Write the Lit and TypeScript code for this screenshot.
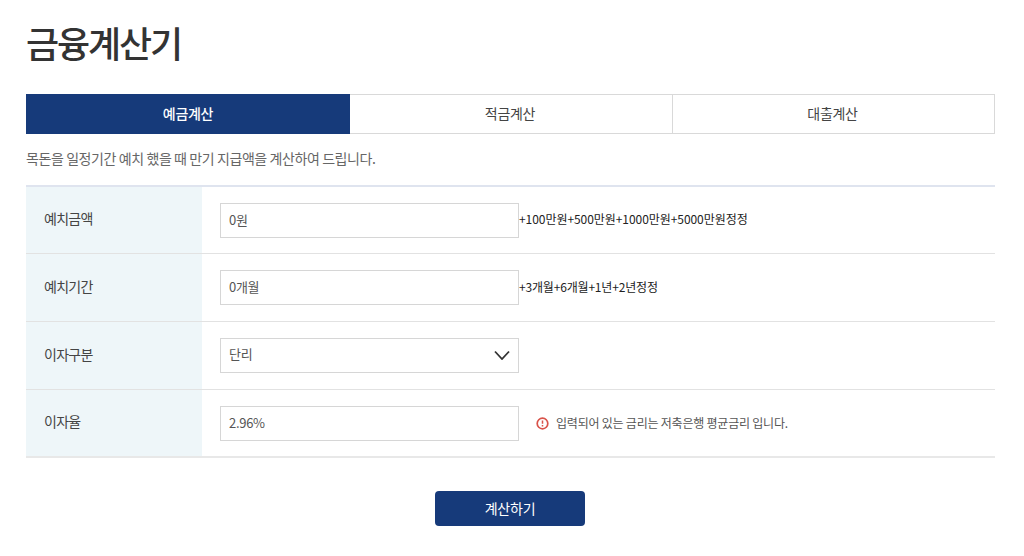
import { LitElement, html, css } from "lit";
import { customElement } from "lit/decorators.js";

@customElement("app-root")
export class AppRoot extends LitElement {
  static styles = css`
    :host {
      display: block;
      width: 1024px;
      height: 556px;
      overflow: hidden;
      background: #fff;
      font-family: "Noto Sans CJK KR", "Noto Sans", sans-serif;
      color: #333;
    }
    * { box-sizing: border-box; }
    .page { padding: 0 29px 0 26px; display: flex; flex-direction: column; }
    h1 {
      margin: 0;
      height: 94px;
      padding-top: 17px;
      font-size: 36px;
      line-height: 50px;
      font-weight: 500;
      letter-spacing: -2.1px;
      color: #333;
    }
    .tabs { display: grid; grid-template-columns: 324px 323px 322px; height: 40px; }
    .tab {
      display: flex;
      align-items: center;
      justify-content: center;
      font-size: 14px;
      letter-spacing: -0.3px;
      color: #444;
      border: 1px solid #d9d9d9;
      border-left: 0;
      padding: 0 2px 2px 0;
    }
    .tab.active { background: #163a7a; border: 0; color: #fff; font-weight: 500; padding: 0 0 2px 0; }
    .desc {
      margin: 0;
      height: 51px;
      padding-top: 14px;
      font-size: 14px;
      line-height: 20px;
      letter-spacing: -0.41px;
      color: #666;
    }
    .table { border-top: 2px solid #dfe4ef; display: flex; flex-direction: column; }
    .row {
      display: grid;
      grid-template-columns: 176px 1fr;
      height: 68px;
      border-bottom: 1px solid #e2e2e2;
    }
    .row.first { height: 67px; }
    .row.last { border-bottom-width: 2px; border-bottom-color: #e8e8e8; }
    .label {
      background: #eef6f9;
      display: flex;
      align-items: center;
      padding: 0 0 4px 18px;
      font-size: 14px;
      letter-spacing: -0.7px;
      color: #444;
    }
    .cell { display: flex; align-items: center; padding-left: 18px; }
    .field {
      width: 299px;
      height: 35px;
      border: 1px solid #d6d6d6;
      background: #fff;
      padding: 0 8px 2px;
      font: inherit;
      font-size: 13px;
      letter-spacing: -0.3px;
      color: #555;
      outline: none;
      border-radius: 0;
      display: block;
    }
    .select-wrap { position: relative; width: 299px; height: 35px; }
    select.field { appearance: none; -webkit-appearance: none; padding-bottom: 4px; }
    .chevron { position: absolute; right: 9px; top: 12px; width: 16px; height: 10px; pointer-events: none; }
    .chips { display: flex; font-size: 12px; letter-spacing: -0.06px; color: #222; padding-bottom: 3px; }
    .chips.tight { letter-spacing: -0.18px; }
    .note { display: flex; align-items: center; margin-left: 17px; font-size: 12px; letter-spacing: -0.22px; color: #555; }
    .note span { padding-bottom: 2px; }
    .note svg { width: 13px; height: 13px; margin-right: 7px; }
    .actions { display: flex; justify-content: center; padding: 33px 1px 0 0; }
    button {
      width: 150px;
      height: 35px;
      border: 0;
      border-radius: 4px;
      background: #163a7a;
      color: #fff;
      font: inherit;
      font-size: 14px;
      letter-spacing: -0.2px;
      padding: 0 0 2px;
    }
  `;

  render() {
    return html`
      <div class="page">
        <h1>금융계산기</h1>
        <div class="tabs">
          <div class="tab active">예금계산</div>
          <div class="tab">적금계산</div>
          <div class="tab">대출계산</div>
        </div>
        <p class="desc">목돈을 일정기간 예치 했을 때 만기 지급액을 계산하여 드립니다.</p>
        <div class="table">
          <div class="row first">
            <div class="label">예치금액</div>
            <div class="cell">
              <input class="field" .value=${"0원"} />
              <div class="chips">
                <span>+100만원</span><span>+500만원</span><span>+1000만원</span><span>+5000만원</span><span>정정</span>
              </div>
            </div>
          </div>
          <div class="row">
            <div class="label">예치기간</div>
            <div class="cell">
              <input class="field" .value=${"0개월"} />
              <div class="chips tight">
                <span>+3개월</span><span>+6개월</span><span>+1년</span><span>+2년</span><span>정정</span>
              </div>
            </div>
          </div>
          <div class="row">
            <div class="label">이자구분</div>
            <div class="cell">
              <div class="select-wrap">
                <select class="field"><option>단리</option><option>복리</option></select>
                <svg class="chevron" viewBox="0 0 16 10" fill="none" stroke="#333" stroke-width="1.8">
                  <path d="M1 1.5 8 9 15 1.5" />
                </svg>
              </div>
            </div>
          </div>
          <div class="row last">
            <div class="label">이자율</div>
            <div class="cell">
              <input class="field" .value=${"2.96%"} />
              <div class="note">
                <svg viewBox="0 0 13 13" fill="none">
                  <circle cx="6.5" cy="6.5" r="5.3" stroke="#d9534a" stroke-width="1.7" />
                  <path d="M6.5 3.6v3.2M6.5 8.1v1.4" stroke="#d9534a" stroke-width="1.5" />
                </svg>
                <span>입력되어 있는 금리는 저축은행 평균금리 입니다.</span>
              </div>
            </div>
          </div>
        </div>
        <div class="actions"><button>계산하기</button></div>
      </div>
    `;
  }
}
